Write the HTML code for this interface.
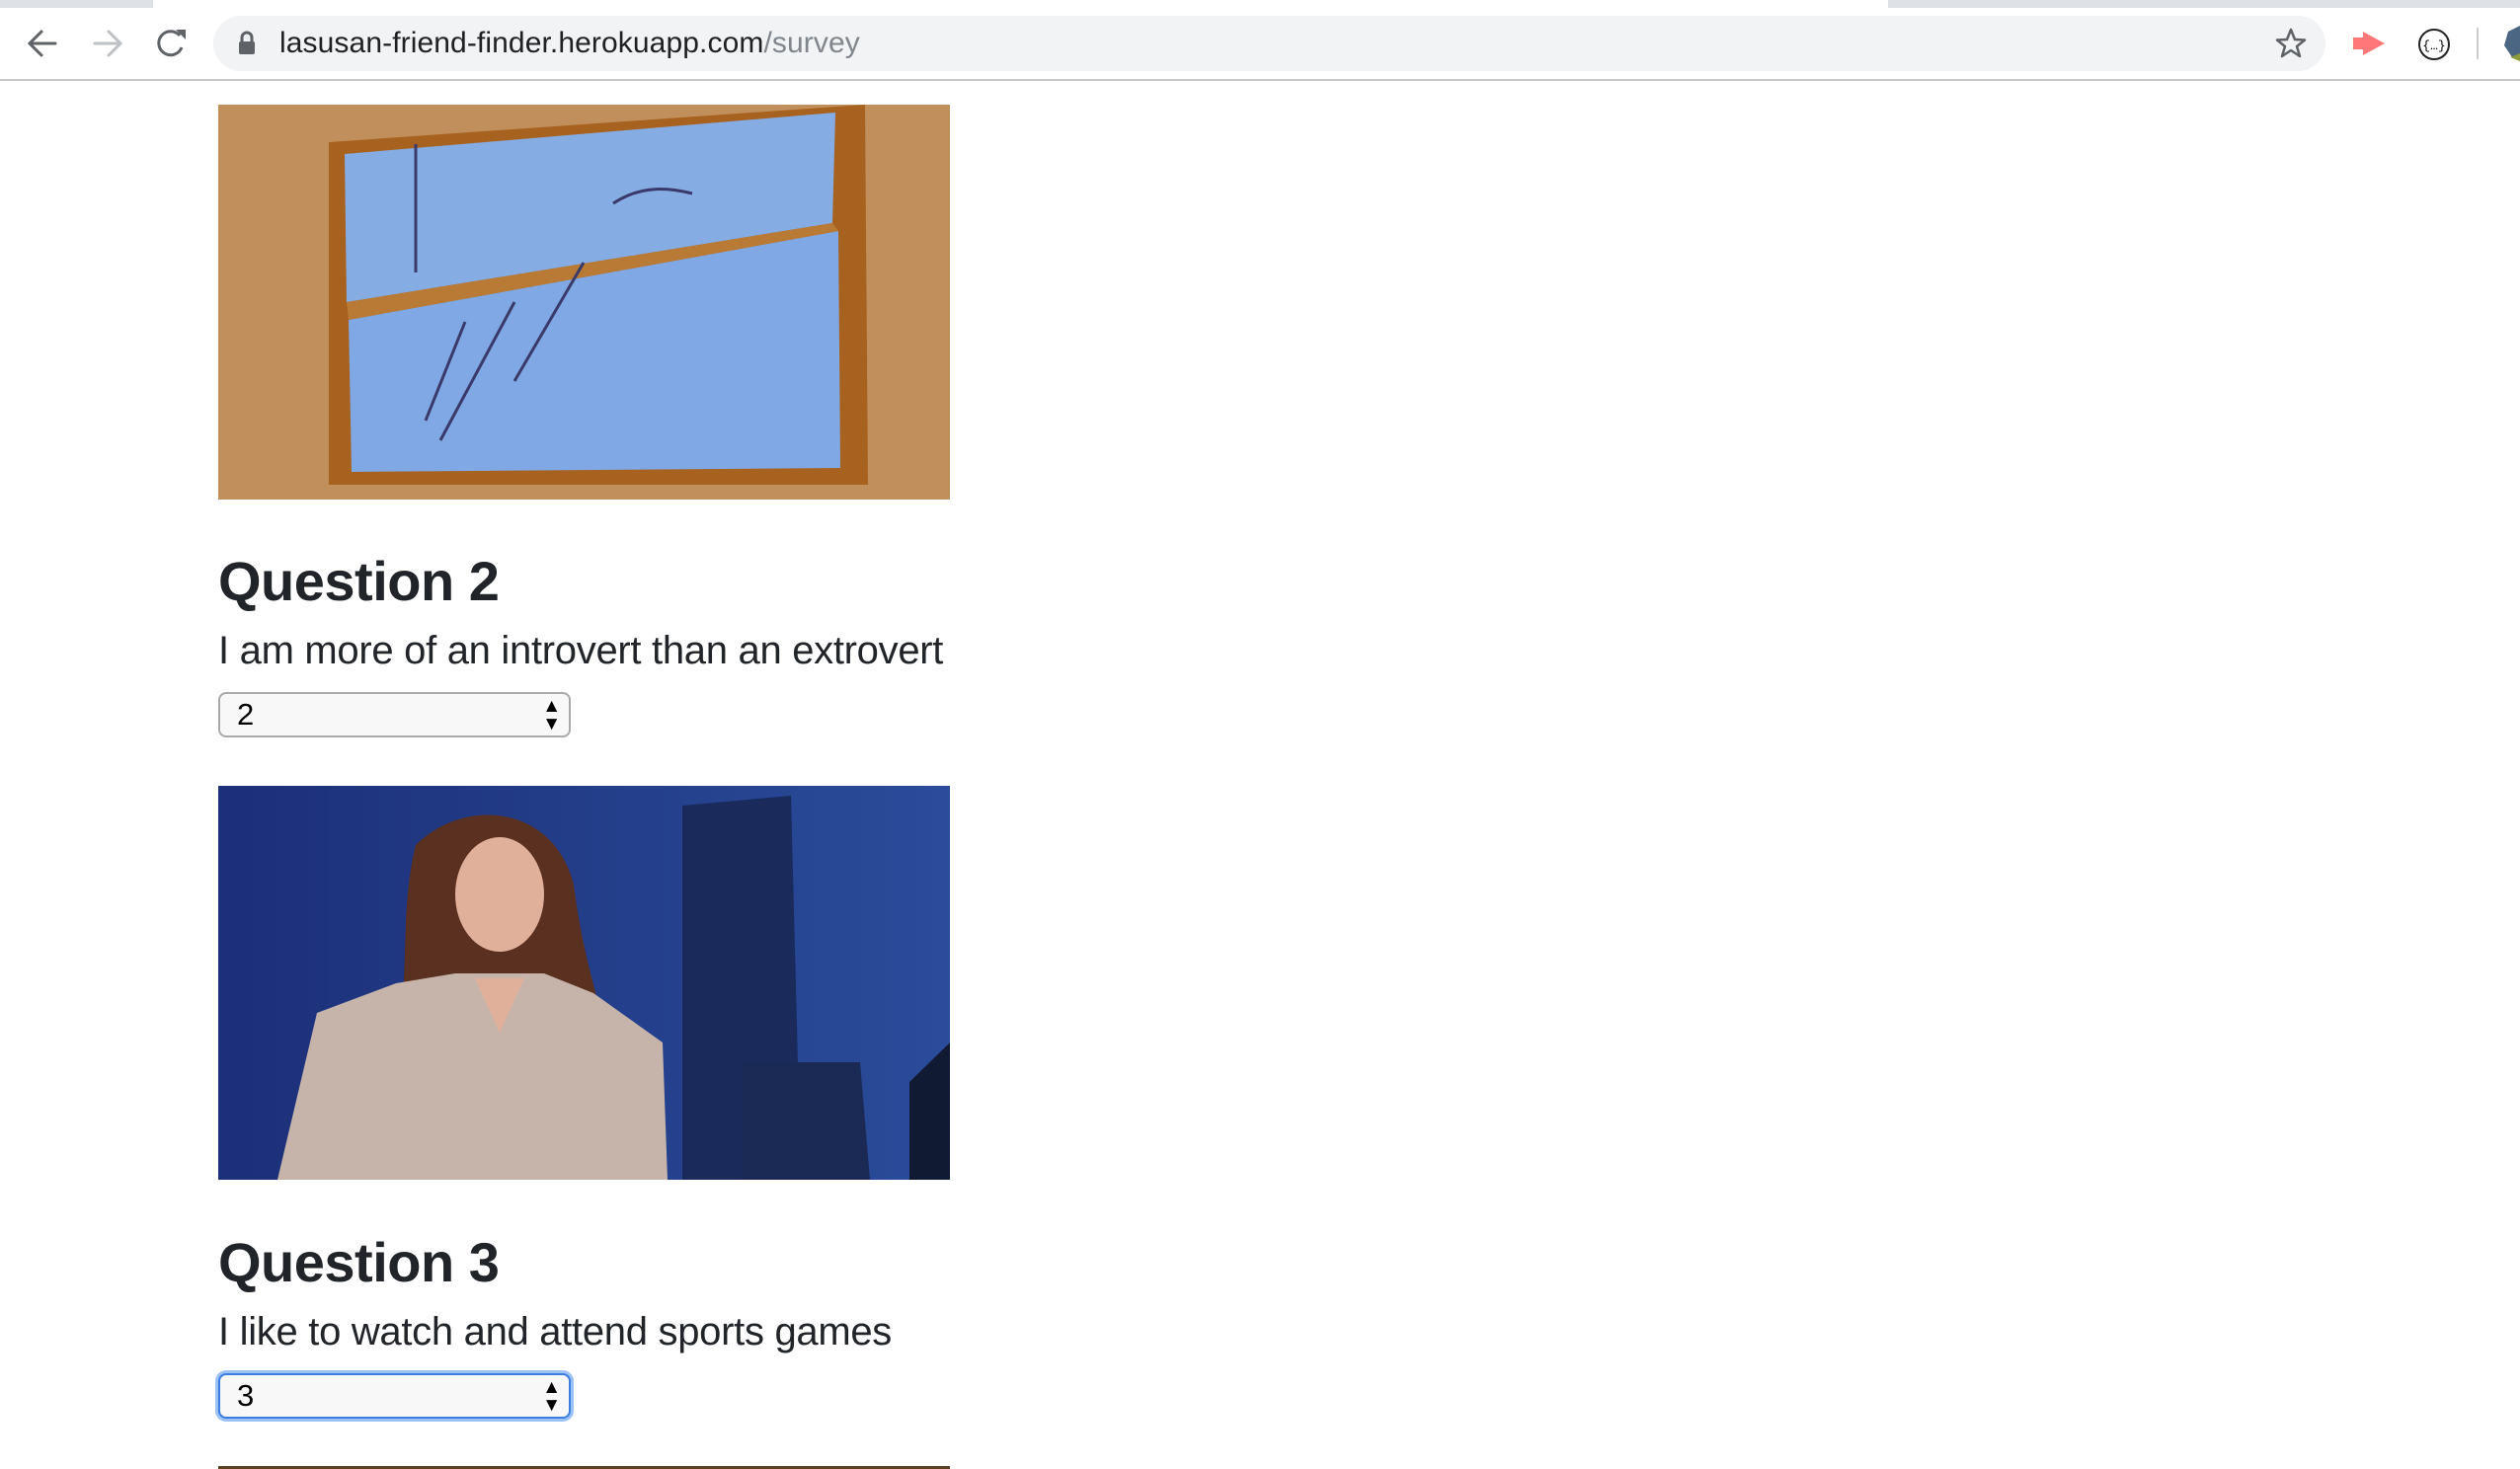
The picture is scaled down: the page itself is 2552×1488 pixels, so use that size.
<!DOCTYPE html>
<html><head><meta charset="utf-8"><style>
*{margin:0;padding:0;box-sizing:border-box}
body{width:2552px;height:1488px;background:#fff;position:relative;overflow:hidden;font-family:"Liberation Sans",sans-serif}
.abs{position:absolute}
h2{position:absolute;left:221px;font-size:56px;font-weight:bold;color:#212529;line-height:1;letter-spacing:-0.5px}
p{position:absolute;left:221px;font-size:40px;color:#212529;line-height:1;letter-spacing:-0.3px}
.sel{position:absolute;left:221px;width:357px;height:46px;border:2px solid #a9a9a9;border-radius:8px;background:#f8f8f8;font-size:31px;color:#000;padding-left:17px;line-height:42px}
.sel .ar{position:absolute;right:8px;top:4px;font-size:19px;line-height:18px}
.focus{border-color:#3b7de0;box-shadow:0 0 0 3px #9cc2f5}
</style></head><body>
<div class="abs" style="left:0;top:0;width:2552px;height:8px;background:#dee1e6"></div>
<div class="abs" style="left:155px;top:0;width:1757px;height:8px;background:#fff"></div>
<div class="abs" style="left:0;top:80px;width:2552px;height:2px;background:#c8c8c8"></div>
<svg class="abs" style="left:0;top:16px" width="220" height="56">
<g fill="none" stroke="#5f6368" stroke-width="3" stroke-linecap="round"><path d="M56 28H30M42 16L30 28L42 40"/></g>
<g fill="none" stroke="#bdc1c6" stroke-width="3" stroke-linecap="round"><path d="M96 28H122M110 16L122 28L110 40"/></g>
<g fill="none" stroke="#5f6368" stroke-width="3"><path d="M182 20A12 12 0 1 0 184 32"/></g><path d="M178 14L188 14L188 24Z" fill="#5f6368"/>
</svg>
<div class="abs" style="left:216px;top:16px;width:2139px;height:56px;background:#f1f3f4;border-radius:28px"></div>
<svg class="abs" style="left:240px;top:30px" width="20" height="28"><path d="M5 12V8a5 5 0 0 1 10 0v4" fill="none" stroke="#5f6368" stroke-width="3"/><rect x="2" y="12" width="16" height="13" rx="2" fill="#5f6368"/></svg>
<div class="abs" style="left:283px;top:26px;font-size:30px;color:#202124;line-height:36px;letter-spacing:0.1px">lasusan-friend-finder.herokuapp.com<span style="color:#80868b">/survey</span></div>
<svg class="abs" style="left:2304px;top:28px" width="32" height="32"><path d="M16 2L20 12L30 12.5L22 19L25 29L16 23L7 29L10 19L2 12.5L12 12Z" fill="none" stroke="#5f6368" stroke-width="2.5" stroke-linejoin="round"/></svg>
<svg class="abs" style="left:2383px;top:30px" width="36" height="28"><path d="M0 8h10v12H0z M10 2l22 12L10 26z" fill="#f77"/></svg>
<svg class="abs" style="left:2448px;top:28px" width="34" height="34"><circle cx="17" cy="17" r="15" fill="none" stroke="#222" stroke-width="2"/><text x="17" y="22" font-size="13" text-anchor="middle" font-family="Liberation Mono">{…}</text></svg>
<div class="abs" style="left:2508px;top:28px;width:2px;height:32px;background:#ccc"></div>
<svg class="abs" style="left:2534px;top:24px" width="18" height="40"><path d="M18 2L6 8L2 22L10 34L18 36Z" fill="#4a6682"/><path d="M8 34L18 30V38Z" fill="#8a9a3a"/></svg>

<svg class="abs" style="left:221px;top:106px" width="741" height="400" viewBox="0 0 741 400">
<rect width="741" height="400" fill="#c08f5c"/>
<path d="M112 38L655 0L658 385L112 385Z" fill="#a86220"/>
<path d="M128 50L625 8L622 120L130 200Z" fill="#86ace4"/>
<path d="M132 218L628 128L630 368L135 372Z" fill="#7fa8e4"/>
<path d="M130 200L622 120L628 128L132 218Z" fill="#b87a34"/>
<g stroke="#3a3a6a" stroke-width="3" fill="none"><path d="M200 40L200 170M250 220L210 320M300 200L225 340M370 160L300 280M400 100C430 80 460 85 480 90"/></g>
</svg>
<h2 style="top:561px">Question 2</h2>
<p style="top:639px">I am more of an introvert than an extrovert</p>
<div class="sel" style="top:701px">2<span class="ar">▲<br>▼</span></div>

<svg class="abs" style="left:221px;top:796px" width="741" height="399" viewBox="0 0 741 399">
<defs><linearGradient id="g" x1="0" y1="0" x2="1" y2="0"><stop offset="0" stop-color="#1c2f78"/><stop offset="1" stop-color="#2a4c9a"/></linearGradient></defs>
<rect width="741" height="399" fill="url(#g)"/>
<path d="M470 20L580 10L590 399L470 399Z" fill="#1a2a5a"/>
<path d="M530 280L650 280L660 399L530 399Z" fill="#1a2a55"/>
<path d="M700 300L741 260L741 399L700 399Z" fill="#111a33"/>
<path d="M200 60C250 10 340 20 360 100C370 180 390 230 400 280L170 290C200 220 180 140 200 60Z" fill="#5a3020"/>
<ellipse cx="285" cy="110" rx="45" ry="58" fill="#e1b09a"/>
<path d="M240 190L330 190L380 210L450 260L455 399L60 399L100 230L180 200Z" fill="#c6b4ab"/>
<path d="M260 195L285 250L310 195Z" fill="#e1b09a"/>
</svg>
<h2 style="top:1251px">Question 3</h2>
<p style="top:1329px">I like to watch and attend sports games</p>
<div class="sel focus" style="top:1391px">3<span class="ar">▲<br>▼</span></div>
<div class="abs" style="left:221px;top:1485px;width:741px;height:3px;background:#5a4020"></div>
</body></html>
